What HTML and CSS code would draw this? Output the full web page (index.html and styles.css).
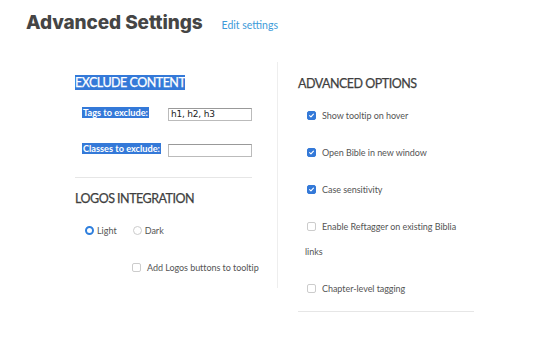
FILE: index.html
```html
<!DOCTYPE html>
<html>
<head>
<meta charset="utf-8">
<link rel="stylesheet" href="styles.css">
</head>
<body>
<header class="top">
  <h1 class="title">Advanced Settings</h1>
  <a class="edit" href="#">Edit settings</a>
</header>
<main class="cols">
  <section class="left">
    <h2 class="head"><span class="sel">EXCLUDE CONTENT</span></h2>
    <div class="field f1">
      <label class="lbl"><span class="sel">Tags to exclude:</span></label>
      <span class="input">h1, h2, h3</span>
    </div>
    <div class="field f2">
      <label class="lbl"><span class="sel">Classes to exclude:</span></label>
      <span class="input"></span>
    </div>
    <hr class="rule rule-left">
    <h2 class="head head2">LOGOS INTEGRATION</h2>
    <div class="radios">
      <span class="radio on"></span><span class="rtext">Light</span>
      <span class="radio"></span><span class="rtext">Dark</span>
    </div>
    <div class="opt opt-logos">
      <span class="box"></span><span class="otext">Add Logos buttons to tooltip</span>
    </div>
  </section>
  <section class="right">
    <h2 class="head">ADVANCED OPTIONS</h2>
    <div class="opts">
      <p class="opt"><span class="box checked"><svg viewBox="0 0 10 10" width="10" height="10"><path d="M2.3 5.2 L4.2 7 L7.8 3" fill="none" stroke="#fff" stroke-width="1.6" stroke-linecap="round" stroke-linejoin="round"/></svg></span><span class="otext">Show tooltip on hover</span></p>
      <p class="opt"><span class="box checked"><svg viewBox="0 0 10 10" width="10" height="10"><path d="M2.3 5.2 L4.2 7 L7.8 3" fill="none" stroke="#fff" stroke-width="1.6" stroke-linecap="round" stroke-linejoin="round"/></svg></span><span class="otext">Open Bible in new window</span></p>
      <p class="opt"><span class="box checked"><svg viewBox="0 0 10 10" width="10" height="10"><path d="M2.3 5.2 L4.2 7 L7.8 3" fill="none" stroke="#fff" stroke-width="1.6" stroke-linecap="round" stroke-linejoin="round"/></svg></span><span class="otext">Case sensitivity</span></p>
      <p class="opt wrap"><span class="box"></span><span class="otext">Enable Reftagger on existing Biblia</span> links</p>
      <p class="opt last"><span class="box"></span><span class="otext">Chapter-level tagging</span></p>
    </div>
    <hr class="rule rule-right">
  </section>
</main>
</body>
</html>
```

FILE: styles.css
```css
html, body {
  margin: 0;
  padding: 0;
  background: #fff;
}
body {
  font-family: "Lato", "Open Sans", sans-serif;
  color: #555;
  width: 550px;
  height: 347px;
  overflow: hidden;
}
.top {
  display: flex;
  align-items: baseline;
  padding: 10px 0 0 26px;
  height: 52px;
  box-sizing: border-box;
}
.title {
  margin: 0;
  font-family: "Inter", sans-serif;
  font-weight: 800;
  font-size: 19px;
  letter-spacing: -0.1px;
  color: #454545;
  line-height: 26px;
}
.edit {
  margin-left: 19px;
  font-size: 10.5px;
  color: #3d9bd9;
  text-decoration: none;
  font-family: "Lato", sans-serif;
}
.cols {
  display: flex;
  align-items: flex-start;
  padding-left: 75px;
  padding-top: 10px;
}
.left {
  width: 203px;
  height: 226px;
  box-sizing: border-box;
  border-right: 1px solid #eee;
  padding-right: 25px;
  padding-top: 13px;
}
.head {
  margin: 0;
  font-size: 12.5px;
  font-weight: 400;
  color: #3f3f3f;
  line-height: 15px;
  letter-spacing: -0.5px;
  -webkit-text-stroke: 0.25px currentColor;
}
.sel {
  background: #3479d8;
  color: #fff;
}
.field {
  display: flex;
  align-items: flex-start;
  padding-left: 7px;
}
.f1 { margin-top: 17px; }
.f2 { margin-top: 22px; }
.lbl {
  width: 87px;
  font-size: 9.2px;
  font-weight: 700;
  line-height: 11px;
  white-space: nowrap;
}
.lbl .sel { padding: 0 1px; }
.input {
  display: block;
  width: 85px;
  height: 13px;
  box-sizing: border-box;
  border: 1px solid #bbb;
  border-top-color: #999;
  font-family: "DejaVu Sans", sans-serif;
  font-size: 9px;
  letter-spacing: -0.2px;
  line-height: 11px;
  padding-left: 2px;
  color: #222;
  margin-top: 1px;
}
.rule {
  border: 0;
  border-top: 1px solid #e6e6e6;
  margin: 0;
}
.rule-left { margin-top: 20px; }
.head2 { margin-top: 13px; }
.radios {
  display: flex;
  align-items: center;
  padding-left: 10px;
  margin-top: 19px;
  font-size: 9px;
}
.radio {
  width: 9px;
  height: 9px;
  border: 1px solid #ccc;
  border-radius: 50%;
  box-sizing: border-box;
}
.radio.on {
  border: 2.5px solid #2f7fdd;
}
.rtext { margin-left: 3px; margin-right: 16px; }
.opt {
  display: flex;
  align-items: center;
  font-size: 9px;
  letter-spacing: -0.05px;
  margin: 0;
  white-space: nowrap;
}
.opt-logos {
  padding-left: 57px;
  margin-top: 26px;
}
.box {
  width: 9px;
  height: 9px;
  box-sizing: border-box;
  border: 1px solid #ccc;
  border-radius: 2px;
  display: inline-flex;
  align-items: center;
  justify-content: center;
  flex: none;
}
.box.checked {
  background: #3479d8;
  border-color: #3479d8;
}
.box svg { width: 9px; height: 9px; }
.otext { margin-left: 6px; }
.right {
  width: 197px;
  padding-left: 20px;
  box-sizing: border-box;
  padding-top: 14px;
}
.opts {
  margin-top: 12px;
}
.right .opt {
  padding-left: 9px;
  line-height: 25px;
  margin-bottom: 12px;
}
.right .opt.wrap {
  display: block;
  padding-left: 7px;
  width: 155px;
  white-space: normal;
}
.right .opt.last { margin-bottom: 10px; }
.wrap .box {
  margin-left: 2px;
  vertical-align: -1px;
}
.rule-right {
  margin-top: 0;
  width: 176px;
}
```
